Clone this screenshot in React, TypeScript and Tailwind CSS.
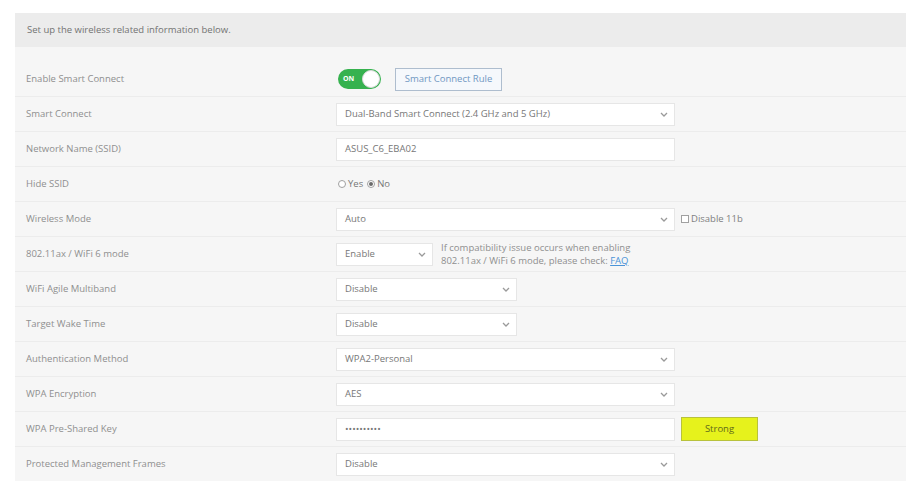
import type { ReactNode } from 'react'

const font = { fontFamily: '"Open Sans", "Liberation Sans", sans-serif' }

function Chevron() {
  return (
    <svg width="8" height="5" viewBox="0 0 8 5" className="shrink-0">
      <path d="M1 1l3 3 3-3" fill="none" stroke="#9a9a9a" strokeWidth="1.3" />
    </svg>
  )
}

function SelectBox({ value, width }: { value: string; width: string }) {
  return (
    <div className={`${width} h-[23px] bg-white border border-[#e6e6e6] flex items-center justify-between pl-2 pr-[6px] text-[#777]`}>
      <span>{value}</span>
      <Chevron />
    </div>
  )
}

function TextBox({ value }: { value: string }) {
  return (
    <div className="w-[339px] h-[23px] bg-white border border-[#e6e6e6] flex items-center pl-2 text-[#777]">
      {value}
    </div>
  )
}

function Row({ label, children }: { label: string; children: ReactNode }) {
  return (
    <div className="h-[35px] flex items-center border-b border-[#ececec]">
      <div className="w-[321px] pl-[11px] text-[#8f8f8f]">{label}</div>
      <div className="flex items-center">{children}</div>
    </div>
  )
}

export default function App() {
  return (
    <div className="w-[924px] h-[481px] bg-white pt-[13px] pl-[15px] pr-[18px] overflow-hidden text-[9.5px]" style={font}>
      <div className="h-[34px] bg-[#ececec] flex items-center pl-3 text-[#737373]">
        Set up the wireless related information below.
      </div>
      <div className="bg-[#f6f6f6] pt-[15px]">
        <Row label="Enable Smart Connect">
          <div className="w-[43px] h-[20px] rounded-full bg-[#36b24f] flex items-center justify-between pl-[5px] pr-[1px] ml-[2px]">
            <span className="text-white text-[7px] font-bold">ON</span>
            <span className="w-[18px] h-[18px] rounded-full bg-white border border-[#d9d9d9]" />
          </div>
          <div className="ml-[14px] w-[107px] h-[23px] border border-[#aebdce] bg-[#f5f8fc] flex items-center justify-center text-[#7097c2]">
            Smart Connect Rule
          </div>
        </Row>
        <Row label="Smart Connect">
          <SelectBox width="w-[339px]" value="Dual-Band Smart Connect (2.4 GHz and 5 GHz)" />
        </Row>
        <Row label="Network Name (SSID)">
          <TextBox value="ASUS_C6_EBA02" />
        </Row>
        <Row label="Hide SSID">
          <div className="flex items-center text-[#777] ml-[2px]">
            <span className="w-[8px] h-[8px] rounded-full border border-[#a0a0a0] bg-white mr-[2px]" />
            <span className="mr-[4px]">Yes</span>
            <span className="w-[8px] h-[8px] rounded-full border border-[#a0a0a0] bg-white mr-[2px] flex items-center justify-center">
              <span className="w-[4px] h-[4px] rounded-full bg-[#6a6a6a]" />
            </span>
            <span>No</span>
          </div>
        </Row>
        <Row label="Wireless Mode">
          <SelectBox width="w-[339px]" value="Auto" />
          <div className="flex items-center ml-[6px] text-[#808080]">
            <span className="w-[8px] h-[8px] border border-[#a0a0a0] bg-white mr-[2px]" />
            Disable 11b
          </div>
        </Row>
        <Row label="802.11ax / WiFi 6 mode">
          <SelectBox width="w-[97px]" value="Enable" />
          <div className="ml-[8px] leading-[13px] text-[#8f8f8f]">
            <div>If compatibility issue occurs when enabling</div>
            <div>
              802.11ax / WiFi 6 mode, please check: <span className="text-[#4a94d8] underline">FAQ</span>
            </div>
          </div>
        </Row>
        <Row label="WiFi Agile Multiband">
          <SelectBox width="w-[181px]" value="Disable" />
        </Row>
        <Row label="Target Wake Time">
          <SelectBox width="w-[181px]" value="Disable" />
        </Row>
        <Row label="Authentication Method">
          <SelectBox width="w-[339px]" value="WPA2-Personal" />
        </Row>
        <Row label="WPA Encryption">
          <SelectBox width="w-[339px]" value="AES" />
        </Row>
        <Row label="WPA Pre-Shared Key">
          <TextBox value="••••••••••" />
          <div className="ml-[6px] w-[77px] h-[24px] bg-[#e6f21c] border border-[#b8c23c] flex items-center justify-center text-[#5f6a1a]">
            Strong
          </div>
        </Row>
        <Row label="Protected Management Frames">
          <SelectBox width="w-[339px]" value="Disable" />
        </Row>
      </div>
    </div>
  )
}
